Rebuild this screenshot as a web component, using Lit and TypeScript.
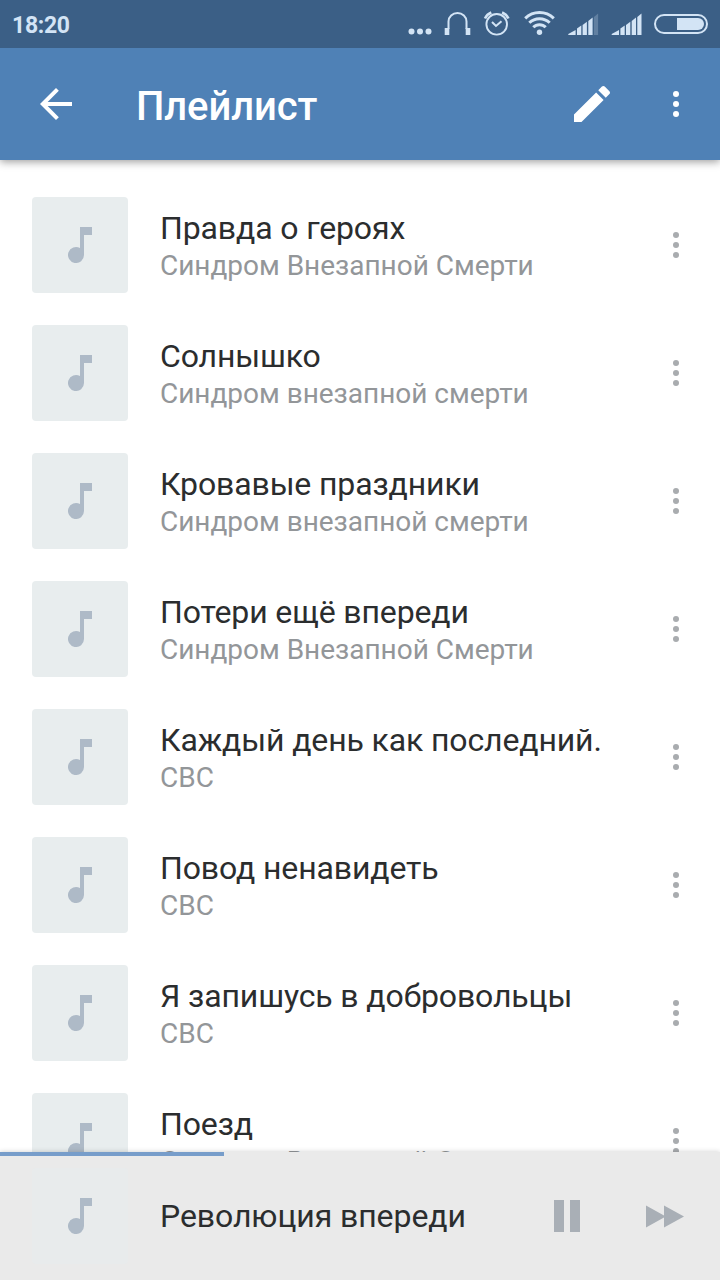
import { LitElement, html, css, svg } from "lit";
import { customElement, property } from "lit/decorators.js";

interface Track {
  title: string;
  artist: string;
}

const TRACKS: Track[] = [
  { title: "Правда о героях", artist: "Синдром Внезапной Смерти" },
  { title: "Солнышко", artist: "Синдром внезапной смерти" },
  { title: "Кровавые праздники", artist: "Синдром внезапной смерти" },
  { title: "Потери ещё впереди", artist: "Синдром Внезапной Смерти" },
  { title: "Каждый день как последний.", artist: "СВС" },
  { title: "Повод ненавидеть", artist: "СВС" },
  { title: "Я запишусь в добровольцы", artist: "СВС" },
  { title: "Поезд", artist: "Синдром Внезапной Смерти" },
];

@customElement("more-dots")
class MoreDots extends LitElement {
  static styles = css`
    :host { display: block; width: 6px; height: 26px; }
    svg { display: block; fill: currentColor; }
  `;
  render() {
    return html`<svg width="6" height="26" viewBox="0 0 6 26">
      <circle cx="3" cy="3" r="3" /><circle cx="3" cy="13" r="3" /><circle cx="3" cy="23" r="3" />
    </svg>`;
  }
}

@customElement("cover-tile")
class CoverTile extends LitElement {
  static styles = css`
    :host {
      display: flex; align-items: center; justify-content: center; flex: none;
      width: 96px; height: 96px; border-radius: 4px; background: #e8edee;
    }
    svg { display: block; fill: #aebac7; }
  `;
  render() {
    return html`<svg width="24" height="36" viewBox="0 0 24 36">
      <path d="M12 0h12v8h-8v20a8 8 0 1 1-4-6.930z" />
    </svg>`;
  }
}

@customElement("status-bar")
class StatusBar extends LitElement {
  static styles = css`
    :host {
      display: flex; justify-content: space-between; height: 48px;
      background: #3b5f86; color: #d3e4f5;
    }
    .time { padding-left: 12px; font-size: 23px; font-weight: 700; line-height: 52px; letter-spacing: -0.3px; }
    .icons { display: block; fill: #d3e4f5; }
    .line { fill: none; stroke: #d3e4f5; }
  `;
  bars(x: number, faded: boolean) {
    const shapes = [
      "M0 35v-1l7.300-4V35z",
      "M8.700 28.500l4.300-3V35H8.700z",
      "M14.300 25l4.300-3.300V35h-4.300z",
      "M20 21l4.300-3.500V35H20z",
      "M25.600 17l4.200-3.500V35h-4.200z",
    ];
    return svg`<g transform=${`translate(${x} 0)`}>${shapes.map(
      (d, i) => svg`<path d=${d} opacity=${faded && i === 4 ? 0.25 : 1} />`
    )}</g>`;
  }
  render() {
    return html`
      <div class="time">18:20</div>
      <svg class="icons" width="320" height="48" viewBox="400 0 320 48">
        <circle cx="411.5" cy="31.5" r="3" /><circle cx="420" cy="31.5" r="3" /><circle cx="428.5" cy="31.5" r="3" />
        <path class="line" stroke-width="2" d="M448.500 29V21.500a9 8.500 0 0 1 18 0V29" />
        <path d="M444.700 28h4.600v7h-4.600zM465.700 28h4.600v7h-4.600z" />
        <circle class="line" stroke-width="1.9" cx="496.7" cy="24.3" r="10.3" />
        <path class="line" stroke-width="2" d="M492 22l4 4 5.500-4.800" />
        <path class="line" stroke-width="2.6" d="M485 18.500q2-4.300 6.300-6M508.400 18.500q-2-4.300-6.300-6" />
        <circle cx="539.5" cy="32.3" r="2.7" />
        <path class="line" stroke-width="3" d="M533.300 27.300a8.600 8.600 0 0 1 12.400 0M529.300 22.800a14.600 14.600 0 0 1 20.400 0M525.200 18.300a20.800 20.800 0 0 1 28.600 0" />
        ${this.bars(568.3, true)}
        ${this.bars(611.7, false)}
        <rect class="line" stroke-width="2" x="655" y="15" width="52" height="18" rx="9" />
        <path d="M677 18h21a6 6 0 0 1 0 12h-21z" />
      </svg>`;
  }
}

@customElement("app-toolbar")
class AppToolbar extends LitElement {
  static styles = css`
    :host {
      display: flex; align-items: center; height: 112px; box-sizing: border-box;
      padding: 0 41px 0 32px; background: #4f81b6; color: #fff;
    }
    .icon { display: block; fill: #fff; }
    h1 { flex: 1; margin: 0; padding: 6px 0 0 56px; font-size: 40px; line-height: 48px; font-weight: 500; letter-spacing: -0.1px; }
    more-dots { margin-left: 57px; }
  `;
  render() {
    return html`
      <svg class="icon" width="48" height="48" viewBox="0 0 24 24"><path d="M20 11H7.830l5.590-5.590L12 4l-8 8 8 8 1.410-1.410L7.830 13H20v-2z" /></svg>
      <h1>Плейлист</h1>
      <svg class="icon" width="48" height="48" viewBox="0 0 24 24"><path d="M3 17.250V21h3.750L17.810 9.940l-3.750-3.750L3 17.250zM20.710 7.040c.39-.39.39-1.020 0-1.410l-2.340-2.340c-.39-.39-1.020-.39-1.410 0l-1.830 1.830 3.750 3.750 1.830-1.830z" /></svg>
      <more-dots></more-dots>`;
  }
}

@customElement("track-row")
class TrackRow extends LitElement {
  @property({ attribute: false }) track!: Track;
  static styles = css`
    :host {
      display: flex; align-items: center; flex: none; height: 128px;
      box-sizing: border-box; padding: 0 41px 0 32px; gap: 32px;
    }
    .text { flex: 1; white-space: nowrap; }
    .title { font-size: 32px; line-height: 38px; color: #2b2d2e; letter-spacing: -0.13px; }
    .artist { font-size: 28px; line-height: 38px; margin-bottom: -4px; color: #939699; letter-spacing: -0.02px; }
    more-dots { color: #a9acaf; }
  `;
  render() {
    return html`
      <cover-tile></cover-tile>
      <div class="text">
        <div class="title">${this.track.title}</div>
        <div class="artist">${this.track.artist}</div>
      </div>
      <more-dots></more-dots>`;
  }
}

@customElement("mini-player")
class MiniPlayer extends LitElement {
  @property({ type: Number }) progress = 0;
  static styles = css`
    :host { display: block; height: 128px; background: #eaeaea; box-shadow: 0 0 5px rgba(0, 0, 0, 0.2); }
    .track { height: 4px; }
    .fill { height: 4px; background: #779dca; }
    .body { display: flex; align-items: center; height: 120px; padding: 0 36px 0 32px; }
    .title { flex: 1; padding-left: 32px; font-size: 32px; line-height: 38px; color: #2b2d2e; letter-spacing: -0.08px; }
    cover-tile { background: #e8ebec; }
    svg { display: block; fill: #a9afb6; }
    .next { margin-left: 66px; }
  `;
  render() {
    return html`
      <div class="track"><div class="fill" style="width:${this.progress}%"></div></div>
      <div class="body">
        <cover-tile></cover-tile>
        <div class="title">Революция впереди</div>
        <svg width="26" height="32" viewBox="0 0 26 32"><path d="M0 0h10v32H0zM16 0h10v32H16z" /></svg>
        <svg class="next" width="38" height="24" viewBox="0 0 38 24"><path d="M0 1.500l18 10V1.500l20 11-20 11V13.500L0 23.500z" /></svg>
      </div>`;
  }
}

@customElement("app-root")
class AppRoot extends LitElement {
  static styles = css`
    :host {
      display: flex; flex-direction: column; width: 720px; height: 1280px;
      overflow: hidden; background: #fff; font-family: Roboto, sans-serif;
    }
    header { flex: none; position: relative; z-index: 1; box-shadow: 0 2px 8px rgba(0, 0, 0, 0.38); }
    main { flex: 1; min-height: 0; overflow: hidden; display: flex; flex-direction: column; padding-top: 21px; }
    mini-player { flex: none; position: relative; z-index: 1; }
  `;
  render() {
    return html`
      <header>
        <status-bar></status-bar>
        <app-toolbar></app-toolbar>
      </header>
      <main>${TRACKS.map((t) => html`<track-row .track=${t}></track-row>`)}</main>
      <mini-player progress="31.111"></mini-player>`;
  }
}
